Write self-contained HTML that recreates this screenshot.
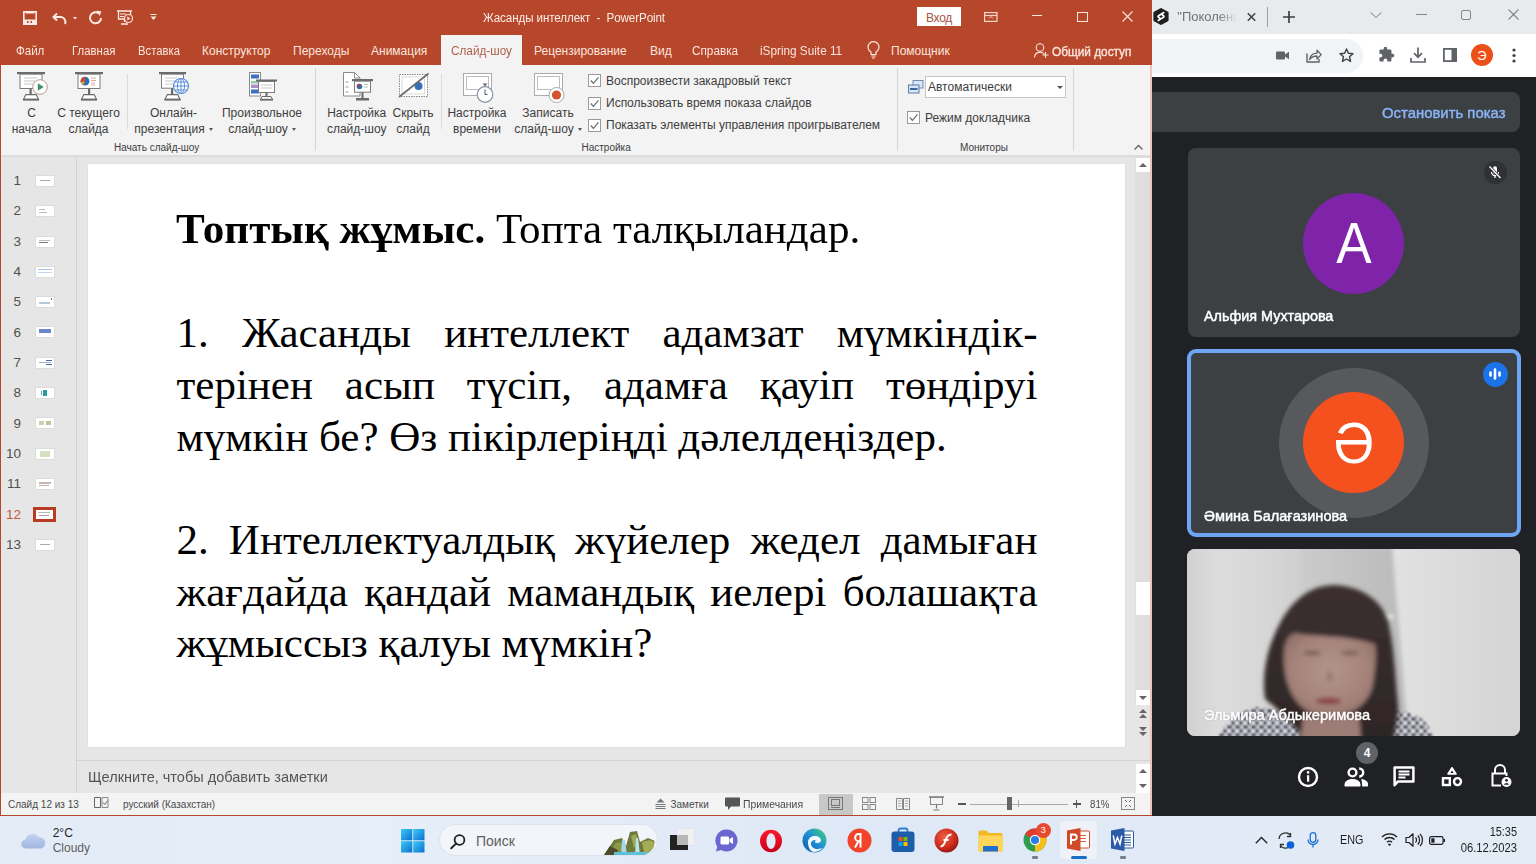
<!DOCTYPE html>
<html><head><meta charset="utf-8">
<style>
*{box-sizing:border-box}
html,body{margin:0;padding:0}
body{width:1536px;height:864px;position:relative;overflow:hidden;font-family:"Liberation Sans",sans-serif;background:#202124}
.a{position:absolute}
.t{position:absolute;white-space:nowrap;line-height:1}
.f12{font-size:12px}
.f10{font-size:10px}
svg{position:absolute;overflow:visible}
</style></head><body>

<!-- ================= POWERPOINT WINDOW ================= -->
<div class="a" id="ppt" style="left:0;top:0;width:1152px;height:816px;background:#e6e6e6;overflow:hidden">
  <!-- title + tabs red -->
  <div class="a" style="left:0;top:0;width:1152px;height:65px;background:#b7472a"></div>
  <!-- ribbon -->
  <div class="a" style="left:0;top:65px;width:1152px;height:90px;background:#f3f3f3"></div>
  <div class="a" style="left:0;top:155px;width:1152px;height:2px;background:#dcdcdc"></div>
  <!-- thumbnail pane -->
  <div class="a" style="left:76px;top:157px;width:1px;height:636px;background:#d2d2d2"></div>
  <!-- slide -->
  <div class="a" style="left:88px;top:163.5px;width:1036.5px;height:583.5px;background:#fff;box-shadow:0 0 1px #c8c8c8"></div>
  <!-- scrollbar -->
  <div class="a" style="left:1135px;top:157px;width:15px;height:603px;background:#dedede"></div>
  <!-- notes divider -->
  <div class="a" style="left:77px;top:760px;width:1075px;height:1px;background:#d2d2d2"></div>
  <!-- status bar -->
  <div class="a" style="left:0;top:793px;width:1152px;height:22px;background:#f3f3f3"></div>
  <!-- borders -->
  <div class="a" style="left:0;top:815px;width:1152px;height:1px;background:#b7472a"></div>
  <div class="a" style="left:0;top:65px;width:1px;height:750px;background:#b7472a"></div>
  <div class="a" style="left:1150px;top:65px;width:2px;height:750px;background:#ecc4b8"></div>

  <!-- QAT -->
  <svg style="left:23px;top:10.5px" width="14" height="14" viewBox="0 0 14 14"><path d="M0.8 0.8h12.4v12.4h-12.4z" fill="none" stroke="#fbeae5" stroke-width="1.6"/><rect x="2.5" y="1" width="9" height="1.5" fill="#fbeae5"/><rect x="1" y="8.5" width="12" height="4.5" fill="#fbeae5"/><rect x="4" y="10" width="1.5" height="2" fill="#b7472a"/><rect x="7.5" y="10" width="1.5" height="2" fill="#b7472a"/></svg>
  <svg style="left:52px;top:11px" width="26" height="14" viewBox="0 0 26 14"><path d="M5 2.5L1.5 6 5 9.5M1.8 6H9a5 5 0 0 1 4 7" fill="none" stroke="#fbeae5" stroke-width="2"/><path d="M21 6h4l-2 2.5z" fill="#fbeae5"/></svg>
  <svg style="left:88px;top:10px" width="15" height="15" viewBox="0 0 15 15"><path d="M10.5 3.2A5.5 5.5 0 1 0 13 8" fill="none" stroke="#fbeae5" stroke-width="2"/><path d="M8.5 0.5L13.5 1.5 11.5 6z" fill="#fbeae5"/></svg>
  <svg style="left:117px;top:10px" width="17" height="16" viewBox="0 0 17 16"><path d="M0 1h15M1.5 1v8h12V1M7.5 9v3M4 14h7" fill="none" stroke="#fbeae5" stroke-width="1.3"/><path d="M3 4h6M3 6.5h4" stroke="#fbeae5" stroke-width="1"/><circle cx="11.5" cy="8.5" r="4" fill="#b7472a" stroke="#fbeae5" stroke-width="1.2"/><path d="M10.3 6.5v4l3-2z" fill="#fbeae5"/></svg>
  <svg style="left:150px;top:14px" width="7" height="7" viewBox="0 0 7 7"><path d="M0.5 0.5h6" stroke="#fbeae5" stroke-width="1"/><path d="M0.5 2.5h6l-3 3.5z" fill="#fbeae5"/></svg>

  <!-- Title -->
  <div class="t f12" style="left:483px;top:12px;color:#fbeee9;letter-spacing:-0.1px;transform-origin:0 0;transform:scaleX(0.967)">Жасанды интеллект&nbsp; -&nbsp; PowerPoint</div>
  <!-- Вход -->
  <div class="a" style="left:917px;top:7px;width:44px;height:19px;background:#fff"></div>
  <div class="t f12" style="left:926px;top:12px;color:#a8543f;letter-spacing:-0.3px">Вход</div>
  <!-- ribbon display options -->
  <svg style="left:984px;top:12px" width="14" height="10" viewBox="0 0 14 10"><rect x="0.6" y="0.6" width="12.4" height="8.8" fill="none" stroke="#f5d5cc" stroke-width="1.2"/><path d="M0.6 3.5h12.4" stroke="#f5d5cc" stroke-width="1.2"/><path d="M5 6.5l2-2 2 2" fill="none" stroke="#f5d5cc" stroke-width="1"/></svg>
  <!-- min / max / close -->
  <div class="a" style="left:1032px;top:15px;width:10px;height:1px;background:#fbe6e0"></div>
  <div class="a" style="left:1077px;top:12px;width:11px;height:10px;border:1px solid #fbe6e0"></div>
  <svg style="left:1122px;top:11px" width="11" height="11" viewBox="0 0 11 11"><path d="M0.5 0.5l10 10M10.5 0.5l-10 10" stroke="#fbe6e0" stroke-width="1.1"/></svg>

  <!-- Tabs -->
  <div class="a" style="left:441px;top:35px;width:81px;height:31px;background:#f3f3f3"></div>
  <div class="t f12" style="left:16px;top:45px;color:#fbe5df;transform-origin:0 0;transform:scaleX(0.96)">Файл</div>
  <div class="t f12" style="left:72px;top:45px;color:#fbe5df;transform-origin:0 0;transform:scaleX(0.95)">Главная</div>
  <div class="t f12" style="left:138px;top:45px;color:#fbe5df;transform-origin:0 0;transform:scaleX(0.94)">Вставка</div>
  <div class="t f12" style="left:202px;top:45px;color:#fbe5df">Конструктор</div>
  <div class="t f12" style="left:293px;top:45px;color:#fbe5df">Переходы</div>
  <div class="t f12" style="left:371px;top:45px;color:#fbe5df">Анимация</div>
  <div class="t f12" style="left:451px;top:45px;color:#ac5f4a;transform-origin:0 0;transform:scaleX(0.98)">Слайд-шоу</div>
  <div class="t f12" style="left:534px;top:45px;color:#fbe5df">Рецензирование</div>
  <div class="t f12" style="left:650px;top:45px;color:#fbe5df">Вид</div>
  <div class="t f12" style="left:692px;top:45px;color:#fbe5df;transform-origin:0 0;transform:scaleX(0.98)">Справка</div>
  <div class="t f12" style="left:760px;top:45px;color:#fbe5df;transform-origin:0 0;transform:scaleX(0.98)">iSpring Suite 11</div>
  <svg style="left:867px;top:42px" width="13" height="17" viewBox="0 0 13 17"><path d="M4 12.5v-2.5a5.5 5.5 0 1 1 5 0v2.5z" fill="none" stroke="#fbe5df" stroke-width="1.2"/><path d="M4.3 14h4.4M5 16h3" stroke="#fbe5df" stroke-width="1.2"/></svg>
  <div class="t f12" style="left:891px;top:45px;color:#fbe5df">Помощник</div>
  <svg style="left:1034px;top:43px" width="15" height="15" viewBox="0 0 15 15"><circle cx="6" cy="4.5" r="3.8" fill="none" stroke="#fbe5df" stroke-width="1.1"/><path d="M0.5 14.5a5.5 5.5 0 0 1 10 -3" fill="none" stroke="#fbe5df" stroke-width="1.1"/><path d="M11.5 9v6M8.5 12h6" stroke="#fbe5df" stroke-width="1.1"/></svg>
  <div class="t f12" style="left:1052px;top:45.5px;color:#fbe5df;-webkit-text-stroke:0.35px #fbe5df;transform-origin:0 0;transform:scaleX(0.985)">Общий доступ</div>
<!-- ===== RIBBON ===== -->
<svg style="left:17px;top:72px" width="32" height="29" viewBox="0 0 32 29"><rect x="0" y="0" width="28" height="2.2" fill="#6a6a6a"/><rect x="3" y="2.2" width="22" height="14.3" fill="#fff" stroke="#7c7c7c" stroke-width="1"/><path d="M7 6h13M7 9h11M7 12h9" stroke="#c8c8c8" stroke-width="1.2"/><rect x="12.5" y="16.5" width="2.2" height="7" fill="#6a6a6a"/><path d="M6.5 27.5L8.8 22.6H19.2L21.5 27.5Z" fill="#fff" stroke="#6a6a6a" stroke-width="1.1"/><rect x="6" y="26.6" width="16" height="2" fill="#6a6a6a"/><circle cx="23" cy="15" r="7.3" fill="#fff" stroke="#b89a9a" stroke-width="1"/><path d="M20.8 11.2v7.6l6-3.8z" fill="#3f9073"/></svg>
<svg style="left:75px;top:72px" width="28" height="29" viewBox="0 0 28 29"><rect x="0" y="0" width="28" height="2.2" fill="#6a6a6a"/><rect x="3" y="2.2" width="22" height="14.3" fill="#fff" stroke="#7c7c7c" stroke-width="1"/><circle cx="10" cy="9.2" r="4.4" fill="#2f6db5"/><path d="M10 9.2V4.8A4.4 4.4 0 0 0 5.8 10.5z" fill="#d9482b"/><path d="M10 9.2L5.8 10.5A4.4 4.4 0 0 0 8 13z" fill="#f0b429"/><path d="M16 6h5M16 8.5h5M16 11h4M16 13h4" stroke="#e0a090" stroke-width="0.9"/><rect x="13" y="16.5" width="2.2" height="7" fill="#6a6a6a"/><path d="M6.5 27.5L8.8 22.6H19.2L21.5 27.5Z" fill="#fff" stroke="#6a6a6a" stroke-width="1.1"/><rect x="6" y="26.6" width="16" height="2" fill="#6a6a6a"/></svg>
<div class="a" style="left:127px;top:74px;width:1px;height:55px;background:#dadada"></div>
<svg style="left:159px;top:72px" width="32" height="29" viewBox="0 0 32 29"><rect x="0" y="0" width="27" height="2.2" fill="#6a6a6a"/><rect x="2.5" y="2.2" width="22" height="14" fill="#fff" stroke="#7c7c7c" stroke-width="1"/><path d="M6 6h12M6 9h10M6 12h8" stroke="#c8c8c8" stroke-width="1.2"/><rect x="12" y="16.2" width="2.2" height="7" fill="#6a6a6a"/><path d="M6 27.5L8.3 22.6H18.7L21 27.5Z" fill="#fff" stroke="#6a6a6a" stroke-width="1.1"/><rect x="5.5" y="26.6" width="16" height="2" fill="#6a6a6a"/><circle cx="22" cy="14" r="7.5" fill="#fff" stroke="#5d8fd6" stroke-width="1.2"/><path d="M14.5 14h15M22 6.5v15M16 10h12M16 18h12" stroke="#5d8fd6" stroke-width="1"/><ellipse cx="22" cy="14" rx="3.5" ry="7.5" fill="none" stroke="#5d8fd6" stroke-width="1"/></svg>
<svg style="left:249px;top:72px" width="29" height="29" viewBox="0 0 29 29"><rect x="0.5" y="0.5" width="11" height="23.5" fill="#fff" stroke="#8a8a8a" stroke-width="1"/><rect x="2" y="2.5" width="8" height="4" fill="#3a72c0"/><rect x="2" y="9" width="8" height="2.5" fill="#8fd0a0"/><rect x="2" y="12.5" width="8" height="3.5" fill="#a890c8"/><rect x="2" y="17.5" width="8" height="4" fill="#3a72c0"/><rect x="7" y="7.5" width="21" height="2" fill="#6a6a6a"/><rect x="9.5" y="9.5" width="16" height="11" fill="#fff" stroke="#7c7c7c" stroke-width="1"/><path d="M12 13h11M12 16h11" stroke="#c8c8c8" stroke-width="1"/><rect x="16.5" y="20.5" width="2" height="5" fill="#6a6a6a"/><path d="M11.5 27.5L13 24.5H22L23.5 27.5Z" fill="#fff" stroke="#6a6a6a" stroke-width="1"/><rect x="11" y="26.8" width="13" height="1.8" fill="#6a6a6a"/></svg>
<div class="a" style="left:315px;top:68px;width:1px;height:83px;background:#d6d6d6"></div>
<svg style="left:343px;top:72px" width="30" height="29" viewBox="0 0 30 29"><path d="M0.5 0.5H11.5L17 6V24H0.5Z" fill="#fff" stroke="#8a8a8a" stroke-width="1"/><path d="M11.5 0.5V6H17" fill="none" stroke="#8a8a8a" stroke-width="1"/><path d="M2.5 10h3M2.5 15h3M2.5 20h3" stroke="#9a9a9a" stroke-width="1"/><rect x="9" y="7" width="21" height="2.2" fill="#6a6a6a"/><rect x="11.5" y="9.2" width="16" height="11" fill="#fff" stroke="#7c7c7c" stroke-width="1"/><circle cx="16.5" cy="14.5" r="2.8" fill="#2f6db5"/><path d="M16.5 14.5V11.7A2.8 2.8 0 0 0 13.8 15z" fill="#c0392b"/><path d="M21 12.5h4M21 15h4" stroke="#a8c0a0" stroke-width="0.9"/><rect x="18.5" y="20.2" width="2" height="6" fill="#6a6a6a"/><rect x="13" y="26" width="13" height="2.5" fill="#6a6a6a"/></svg>
<svg style="left:399px;top:73px" width="30" height="25" viewBox="0 0 30 25"><rect x="0.5" y="1.5" width="28" height="22" fill="#fff" stroke="#8a8a8a" stroke-width="1" stroke-dasharray="1.5 1"/><rect x="3" y="4" width="22.5" height="17" fill="none" stroke="#cfcfcf" stroke-width="0.8"/><circle cx="19.5" cy="13" r="4" fill="#3a6fb5"/><path d="M0 24L29.5 0.5" stroke="#6a6a6a" stroke-width="1.6"/></svg>
<div class="a" style="left:441px;top:74px;width:1px;height:55px;background:#dadada"></div>
<svg style="left:463px;top:73px" width="32" height="31" viewBox="0 0 32 31"><rect x="0.5" y="0.5" width="28" height="22" fill="#fff" stroke="#acacac" stroke-width="1"/><rect x="3.5" y="3.5" width="22" height="13" fill="#fff" stroke="#bdbdbd" stroke-width="1"/><circle cx="22" cy="21.5" r="7.8" fill="#fff" stroke="#8a98ad" stroke-width="1.2"/><path d="M19.5 10.5h5l-2.5 3z" fill="#6a6a6a"/><path d="M22 16.5v5h2.5" fill="none" stroke="#555" stroke-width="1"/></svg>
<svg style="left:534px;top:73px" width="31" height="31" viewBox="0 0 31 31"><rect x="0.5" y="0.5" width="28" height="22" fill="#fff" stroke="#acacac" stroke-width="1"/><rect x="3.5" y="3.5" width="22" height="13" fill="#fff" stroke="#bdbdbd" stroke-width="1"/><circle cx="22.5" cy="22" r="7.5" fill="#fff" stroke="#a8a8a8" stroke-width="1"/><circle cx="22.5" cy="22" r="4.6" fill="#d35230"/></svg>
<div class="t f12" style="left:-68.5px;width:200px;text-align:center;top:106.6px;color:#3d3d3d">С</div>
<div class="t f12" style="left:-68.5px;width:200px;text-align:center;top:122.6px;color:#3d3d3d">начала</div>
<div class="t f12" style="left:-11.5px;width:200px;text-align:center;top:106.6px;color:#3d3d3d">С текущего</div>
<div class="t f12" style="left:-11.5px;width:200px;text-align:center;top:122.6px;color:#3d3d3d">слайда</div>
<div class="t f12" style="left:73.5px;width:200px;text-align:center;top:106.6px;color:#3d3d3d">Онлайн-</div>
<div class="t f12" style="left:73.5px;width:200px;text-align:center;top:122.6px;color:#3d3d3d">презентация<span style="display:inline-block;width:0;height:0;border-left:2.5px solid transparent;border-right:2.5px solid transparent;border-top:3px solid #555;margin-left:4px;vertical-align:2px"></span></div>
<div class="t f12" style="left:162px;width:200px;text-align:center;top:106.6px;color:#3d3d3d">Произвольное</div>
<div class="t f12" style="left:162px;width:200px;text-align:center;top:122.6px;color:#3d3d3d">слайд-шоу<span style="display:inline-block;width:0;height:0;border-left:2.5px solid transparent;border-right:2.5px solid transparent;border-top:3px solid #555;margin-left:4px;vertical-align:2px"></span></div>
<div class="t f12" style="left:256.7px;width:200px;text-align:center;top:106.6px;color:#3d3d3d">Настройка</div>
<div class="t f12" style="left:256.7px;width:200px;text-align:center;top:122.6px;color:#3d3d3d">слайд-шоу</div>
<div class="t f12" style="left:313px;width:200px;text-align:center;top:106.6px;color:#3d3d3d">Скрыть</div>
<div class="t f12" style="left:313px;width:200px;text-align:center;top:122.6px;color:#3d3d3d">слайд</div>
<div class="t f12" style="left:377px;width:200px;text-align:center;top:106.6px;color:#3d3d3d">Настройка</div>
<div class="t f12" style="left:377px;width:200px;text-align:center;top:122.6px;color:#3d3d3d">времени</div>
<div class="t f12" style="left:448px;width:200px;text-align:center;top:106.6px;color:#3d3d3d">Записать</div>
<div class="t f12" style="left:448px;width:200px;text-align:center;top:122.6px;color:#3d3d3d">слайд-шоу<span style="display:inline-block;width:0;height:0;border-left:2.5px solid transparent;border-right:2.5px solid transparent;border-top:3px solid #555;margin-left:4px;vertical-align:2px"></span></div>
<svg style="left:588px;top:74px" width="13" height="13" viewBox="0 0 13 13"><rect x="0.5" y="0.5" width="12" height="12" fill="#fff" stroke="#9a9a9a" stroke-width="1"/><path d="M2.8 6.5l2.6 2.8 5-6" fill="none" stroke="#6a6a6a" stroke-width="1.2"/></svg>
<svg style="left:588px;top:96.5px" width="13" height="13" viewBox="0 0 13 13"><rect x="0.5" y="0.5" width="12" height="12" fill="#fff" stroke="#9a9a9a" stroke-width="1"/><path d="M2.8 6.5l2.6 2.8 5-6" fill="none" stroke="#6a6a6a" stroke-width="1.2"/></svg>
<svg style="left:588px;top:118.5px" width="13" height="13" viewBox="0 0 13 13"><rect x="0.5" y="0.5" width="12" height="12" fill="#fff" stroke="#9a9a9a" stroke-width="1"/><path d="M2.8 6.5l2.6 2.8 5-6" fill="none" stroke="#6a6a6a" stroke-width="1.2"/></svg>
<div class="t f12" style="left:606px;top:74.8px;color:#3d3d3d">Воспроизвести закадровый текст</div>
<div class="t f12" style="left:606px;top:97.1px;color:#3d3d3d">Использовать время показа слайдов</div>
<div class="t f12" style="left:606px;top:119.4px;color:#3d3d3d">Показать элементы управления проигрывателем</div>
<div class="t f10" style="left:114px;top:143.1px;color:#3d3d3d">Начать слайд-шоу</div>
<div class="t f10" style="left:581.5px;top:142.9px;color:#3d3d3d">Настройка</div>
<div class="t f10" style="left:960px;top:142.5px;color:#3d3d3d">Мониторы</div>
<div class="a" style="left:897px;top:68px;width:1px;height:83px;background:#d6d6d6"></div>
<div class="a" style="left:1073px;top:68px;width:1px;height:83px;background:#d6d6d6"></div>
<svg style="left:908px;top:80px" width="16" height="15" viewBox="0 0 16 15"><rect x="5" y="0.5" width="10" height="7.5" fill="#dbe6f4" stroke="#6f8fb8" stroke-width="1"/><rect x="0.5" y="5" width="10.5" height="8" fill="#dbe6f4" stroke="#5a7ca8" stroke-width="1"/><rect x="2" y="8" width="7.5" height="2" fill="#3a66a0"/></svg>
<div class="a" style="left:925px;top:76px;width:141px;height:22px;background:#fff;border:1px solid #c6c6c6"></div>
<div class="t f12" style="left:928px;top:80.8px;color:#3d3d3d">Автоматически</div>
<div class="a" style="left:1057px;top:86px;width:0;height:0;border-left:3px solid transparent;border-right:3px solid transparent;border-top:3px solid #555"></div>
<svg style="left:907px;top:111px" width="13" height="13" viewBox="0 0 13 13"><rect x="0.5" y="0.5" width="12" height="12" fill="#fff" stroke="#9a9a9a" stroke-width="1"/><path d="M2.8 6.5l2.6 2.8 5-6" fill="none" stroke="#6a6a6a" stroke-width="1.2"/></svg>
<div class="t f12" style="left:925px;top:112.2px;color:#3d3d3d">Режим докладчика</div>
<svg style="left:1134px;top:144px" width="9" height="6" viewBox="0 0 9 6"><path d="M0.5 5.5l4-4 4 4" fill="none" stroke="#666" stroke-width="1.3"/></svg>
<div class="t" style="font-size:13.5px;left:0;width:21px;text-align:right;top:174.0px;color:#505050">1</div>
<div class="a" style="left:35.5px;top:175.8px;width:18.5px;height:10px;background:#fff;box-shadow:0 0 0 1px #dcdcdc;overflow:hidden"><div class="a" style="left:4px;top:4px;width:10px;height:1.5px;background:#a8a8a8"></div></div>
<div class="t" style="font-size:13.5px;left:0;width:21px;text-align:right;top:204.3px;color:#505050">2</div>
<div class="a" style="left:35.5px;top:206.1px;width:18.5px;height:10px;background:#fff;box-shadow:0 0 0 1px #dcdcdc;overflow:hidden"><div class="a" style="left:3px;top:3px;width:6px;height:1px;background:#bbb"></div><div class="a" style="left:3px;top:6px;width:8px;height:1px;background:#bbb"></div></div>
<div class="t" style="font-size:13.5px;left:0;width:21px;text-align:right;top:234.6px;color:#505050">3</div>
<div class="a" style="left:35.5px;top:236.5px;width:18.5px;height:10px;background:#fff;box-shadow:0 0 0 1px #dcdcdc;overflow:hidden"><div class="a" style="left:3px;top:3px;width:11px;height:1px;background:#bbb"></div><div class="a" style="left:3px;top:5px;width:9px;height:1.5px;background:#777"></div></div>
<div class="t" style="font-size:13.5px;left:0;width:21px;text-align:right;top:265.0px;color:#505050">4</div>
<div class="a" style="left:35.5px;top:266.8px;width:18.5px;height:10px;background:#fff;box-shadow:0 0 0 1px #dcdcdc;overflow:hidden"><div class="a" style="left:2px;top:2px;width:14px;height:1.5px;background:#a6c2e4"></div><div class="a" style="left:2px;top:5px;width:14px;height:1px;background:#c3d6ec"></div></div>
<div class="t" style="font-size:13.5px;left:0;width:21px;text-align:right;top:295.3px;color:#505050">5</div>
<div class="a" style="left:35.5px;top:297.1px;width:18.5px;height:10px;background:#fff;box-shadow:0 0 0 1px #dcdcdc;overflow:hidden"><div class="a" style="left:3px;top:5px;width:11px;height:1.5px;background:#b9cadc"></div><div class="a" style="left:15px;top:1px;width:1px;height:2px;background:#777"></div></div>
<div class="t" style="font-size:13.5px;left:0;width:21px;text-align:right;top:325.6px;color:#505050">6</div>
<div class="a" style="left:35.5px;top:327.4px;width:18.5px;height:10px;background:#fff;box-shadow:0 0 0 1px #dcdcdc;overflow:hidden"><div class="a" style="left:3px;top:2px;width:12px;height:4px;background:#6a88c8"></div></div>
<div class="t" style="font-size:13.5px;left:0;width:21px;text-align:right;top:356.0px;color:#505050">7</div>
<div class="a" style="left:35.5px;top:357.8px;width:18.5px;height:10px;background:#fff;box-shadow:0 0 0 1px #dcdcdc;overflow:hidden"><div class="a" style="left:3px;top:4px;width:12px;height:1px;background:#aac"></div><div class="a" style="left:10px;top:2px;width:6px;height:1px;background:#4a6aa8"></div><div class="a" style="left:10px;top:6px;width:6px;height:1px;background:#4a6aa8"></div></div>
<div class="t" style="font-size:13.5px;left:0;width:21px;text-align:right;top:386.3px;color:#505050">8</div>
<div class="a" style="left:35.5px;top:388.1px;width:18.5px;height:10px;background:#fff;box-shadow:0 0 0 1px #dcdcdc;overflow:hidden"><div class="a" style="left:7px;top:2px;width:4px;height:6px;background:#2a9aa0"></div><div class="a" style="left:5px;top:3px;width:1px;height:4px;background:#5aa"></div></div>
<div class="t" style="font-size:13.5px;left:0;width:21px;text-align:right;top:416.6px;color:#505050">9</div>
<div class="a" style="left:35.5px;top:418.4px;width:18.5px;height:10px;background:#fff;box-shadow:0 0 0 1px #dcdcdc;overflow:hidden"><div class="a" style="left:3px;top:3px;width:5px;height:4px;background:#c8d4b0"></div><div class="a" style="left:10px;top:3px;width:5px;height:4px;background:#b8c8a0"></div></div>
<div class="t" style="font-size:13.5px;left:0;width:21px;text-align:right;top:446.9px;color:#505050">10</div>
<div class="a" style="left:35.5px;top:448.8px;width:18.5px;height:10px;background:#fff;box-shadow:0 0 0 1px #dcdcdc;overflow:hidden"><div class="a" style="left:4px;top:2px;width:10px;height:6px;background:#d4e0c0"></div></div>
<div class="t" style="font-size:13.5px;left:0;width:21px;text-align:right;top:477.3px;color:#505050">11</div>
<div class="a" style="left:35.5px;top:479.1px;width:18.5px;height:10px;background:#fff;box-shadow:0 0 0 1px #dcdcdc;overflow:hidden"><div class="a" style="left:3px;top:3px;width:12px;height:2px;background:#c8b8b0"></div><div class="a" style="left:3px;top:6px;width:10px;height:1px;background:#bbb"></div></div>
<div class="t" style="font-size:13.5px;left:0;width:21px;text-align:right;top:507.6px;color:#c35a3f">12</div>
<div class="a" style="left:33px;top:506.8px;width:23px;height:15px;border:3px solid #b83b23;background:#fff;overflow:hidden"><div class="a" style="left:2px;top:2px;width:12px;height:1px;background:#bba"></div><div class="a" style="left:3px;top:5px;width:10px;height:1px;background:#b9a"></div></div>
<div class="t" style="font-size:13.5px;left:0;width:21px;text-align:right;top:537.9px;color:#505050">13</div>
<div class="a" style="left:35.5px;top:539.8px;width:18.5px;height:10px;background:#fff;box-shadow:0 0 0 1px #dcdcdc;overflow:hidden"><div class="a" style="left:4px;top:4px;width:10px;height:1.5px;background:#aaa"></div></div>
<div class="a" style="left:1136px;top:158px;width:14px;height:14px;background:#fff"></div>
<div class="a" style="left:1139px;top:163px;width:0;height:0;border-left:4px solid transparent;border-right:4px solid transparent;border-bottom:4px solid #666"></div>
<div class="a" style="left:1136px;top:581.5px;width:14px;height:33px;background:#fff"></div>
<div class="a" style="left:1136px;top:690px;width:14px;height:15px;background:#fff"></div>
<div class="a" style="left:1139px;top:696px;width:0;height:0;border-left:4px solid transparent;border-right:4px solid transparent;border-top:4px solid #666"></div>
<div class="a" style="left:1135px;top:705px;width:15px;height:55px;background:#e6e6e6"></div>
<svg style="left:1139px;top:709px" width="8" height="9" viewBox="0 0 8 9"><path d="M0 4L4 0L8 4zM0 9L4 5L8 9z" fill="#666"/></svg>
<svg style="left:1139px;top:727px" width="8" height="9" viewBox="0 0 8 9"><path d="M0 0L4 4L8 0zM0 5L4 9L8 5z" fill="#666"/></svg>
<div class="a" style="left:1136px;top:764px;width:14px;height:15px;background:#fff"></div>
<div class="a" style="left:1139px;top:769px;width:0;height:0;border-left:4px solid transparent;border-right:4px solid transparent;border-bottom:4px solid #666"></div>
<div class="a" style="left:1136px;top:779px;width:14px;height:14px;background:#fff"></div>
<div class="a" style="left:1139px;top:784px;width:0;height:0;border-left:4px solid transparent;border-right:4px solid transparent;border-top:4px solid #666"></div>
<div class="t" style="font-size:14px;left:88px;top:769.8px;color:#555;transform-origin:0 0;transform:scaleX(1.037)">Щелкните, чтобы добавить заметки</div>
<div class="t f10" style="left:8px;top:800.0px;color:#4a4a4a">Слайд 12 из 13</div>
<svg style="left:94px;top:797px" width="15" height="12" viewBox="0 0 15 12"><path d="M0.5 0.5h6v10h-6z" fill="none" stroke="#666" stroke-width="1"/><path d="M8 0.5h6v10h-6z" fill="none" stroke="#888" stroke-width="1"/><path d="M9 5.5l1.8 2 3-4" fill="none" stroke="#666" stroke-width="1"/></svg>
<div class="t f10" style="left:123px;top:800.0px;color:#4a4a4a">русский (Казахстан)</div>
<svg style="left:655px;top:798px" width="11" height="11" viewBox="0 0 11 11"><path d="M5.5 0.5L9.5 4.5H1.5z" fill="#777"/><path d="M0.5 6.5h10M0.5 8.5h10M0.5 10.5h10" stroke="#777" stroke-width="1"/></svg>
<div class="t f10" style="left:670.5px;top:800.0px;color:#4a4a4a">Заметки</div>
<svg style="left:725px;top:797px" width="15" height="14" viewBox="0 0 15 14"><path d="M1 0.5h13a1 1 0 0 1 1 1v7a1 1 0 0 1-1 1H6l-3 3.5V9.5H1a1 1 0 0 1-1-1v-7a1 1 0 0 1 1-1z" fill="#555"/></svg>
<div class="t f10" style="left:742.5px;top:800.0px;color:#4a4a4a;transform-origin:0 0;transform:scaleX(1.04)">Примечания</div>
<div class="a" style="left:819px;top:794px;width:34px;height:21px;background:#c8c8c8"></div>
<svg style="left:828px;top:797px" width="15" height="13" viewBox="0 0 15 13"><rect x="0.5" y="0.5" width="14" height="12" fill="none" stroke="#777" stroke-width="1"/><rect x="3.5" y="2.5" width="8" height="6" fill="none" stroke="#777" stroke-width="1"/><path d="M3 10.5h9" stroke="#777"/></svg>
<svg style="left:862px;top:797px" width="14" height="13" viewBox="0 0 14 13"><rect x="0.5" y="0.5" width="5.5" height="5" fill="none" stroke="#888"/><rect x="8" y="0.5" width="5.5" height="5" fill="none" stroke="#888"/><rect x="0.5" y="7.5" width="5.5" height="5" fill="none" stroke="#888"/><rect x="8" y="7.5" width="5.5" height="5" fill="none" stroke="#888"/></svg>
<svg style="left:896px;top:797px" width="14" height="13" viewBox="0 0 14 13"><path d="M0.5 1.5h6v11h-6zM7.5 1.5h6v11h-6z" fill="none" stroke="#888"/><path d="M2 4h3M2 6.5h3M2 9h3M9 4h3M9 6.5h3M9 9h3" stroke="#999" stroke-width="0.8"/></svg>
<svg style="left:929px;top:796px" width="15" height="15" viewBox="0 0 15 15"><path d="M0 1h15" stroke="#777" stroke-width="1.5"/><rect x="1.5" y="1.5" width="12" height="7" fill="none" stroke="#888"/><path d="M7.5 8.5v4M4.5 14h6" stroke="#777" stroke-width="1.2"/></svg>
<div class="a" style="left:957.5px;top:803px;width:8px;height:1.5px;background:#555"></div>
<div class="a" style="left:970px;top:803.5px;width:98px;height:1px;background:#a8a8a8"></div>
<div class="a" style="left:1018px;top:800px;width:1px;height:7px;background:#a8a8a8"></div>
<div class="a" style="left:1007px;top:797px;width:4.5px;height:13px;background:#666"></div>
<div class="a" style="left:1072.5px;top:803px;width:8px;height:1.5px;background:#555"></div>
<div class="a" style="left:1075.8px;top:799.8px;width:1.5px;height:8px;background:#555"></div>
<div class="t f10" style="left:1089.5px;top:800.0px;color:#4a4a4a;transform-origin:0 0;transform:scaleX(0.97)">81%</div>
<svg style="left:1121px;top:797px" width="14" height="13" viewBox="0 0 14 13"><rect x="0.5" y="0.5" width="13" height="12" fill="none" stroke="#888"/><path d="M4 3l2 2M10 3l-2 2M4 10l2-2M10 10l-2-2" stroke="#666" stroke-width="1"/></svg>
<div class="t" style="font-family:'Liberation Serif',serif;font-size:43px;left:176px;top:207.2px;color:#000;transform-origin:0 0;transform:scaleX(1.002)"><b>Топтық жұмыс.</b> Топта талқыландар.</div>
<div class="a" style="font-family:'Liberation Serif',serif;font-size:43px;line-height:1;left:176.5px;width:861px;top:311.2px;color:#000;display:flex;justify-content:space-between;white-space:nowrap"><span>1.</span><span>Жасанды</span><span>интеллект</span><span>адамзат</span><span>мүмкіндік-</span></div>
<div class="a" style="font-family:'Liberation Serif',serif;font-size:43px;line-height:1;left:176.5px;width:861px;top:362.8px;color:#000;display:flex;justify-content:space-between;white-space:nowrap"><span>терінен</span><span>асып</span><span>түсіп,</span><span>адамға</span><span>қауіп</span><span>төндіруі</span></div>
<div class="t" style="font-family:'Liberation Serif',serif;font-size:43px;left:176.5px;top:414.5px;color:#000">мүмкін бе? Өз пікірлеріңді дәлелдеңіздер.</div>
<div class="a" style="font-family:'Liberation Serif',serif;font-size:43px;line-height:1;left:176.5px;width:861px;top:517.8px;color:#000;display:flex;justify-content:space-between;white-space:nowrap"><span>2.</span><span>Интеллектуалдық</span><span>жүйелер</span><span>жедел</span><span>дамыған</span></div>
<div class="a" style="font-family:'Liberation Serif',serif;font-size:43px;line-height:1;left:176.5px;width:861px;top:569.5px;color:#000;display:flex;justify-content:space-between;white-space:nowrap"><span>жағдайда</span><span>қандай</span><span>мамандық</span><span>иелері</span><span>болашақта</span></div>
<div class="t" style="font-family:'Liberation Serif',serif;font-size:43px;left:176.5px;top:621.0px;color:#000">жұмыссыз қалуы мүмкін?</div>
</div>

<!-- ================= CHROME ================= -->
<div class="a" id="chrome" style="left:1152px;top:0;width:384px;height:816px;background:#202124;overflow:hidden">
  <div class="a" style="left:0;top:0;width:384px;height:34px;background:#e8eaed"></div>
  <div class="a" style="left:0;top:34px;width:384px;height:43px;background:#fff"></div>
  <div class="a" style="left:-40px;top:39px;width:251px;height:34px;border-radius:17px;background:#f1f3f4"></div>
  <!-- meet top bar -->
  <div class="a" style="left:-20px;top:92px;width:388px;height:40px;border-radius:8px;background:#3c4043"></div>
  <!-- tiles -->
  <div class="a" style="left:36px;top:148px;width:332px;height:189px;border-radius:8px;background:#3c4043"></div>
  <div class="a" style="left:35px;top:349px;width:334px;height:188px;border-radius:9px;background:#3c4043;border:4px solid #6ea6f6"></div>
  <svg style="left:1px;top:8px" width="16" height="17" viewBox="0 0 16 17"><path d="M8 1.2L14.4 4.8V12.2L8 15.8L1.6 12.2V4.8Z" fill="#1f1f1f" stroke="#1f1f1f" stroke-width="2.4" stroke-linejoin="round"/><path d="M10.8 4.6L5.6 7.7Q4.4 8.5 5.6 9.3L6.6 9.9M5.2 12.4L10.4 9.3Q11.6 8.5 10.4 7.7L9.4 7.1" fill="none" stroke="#fff" stroke-width="1.7" stroke-linecap="round"/></svg>
<div class="t" style="font-size:13px;left:25.299999999999955px;top:9.5px;color:#707478;width:60px;overflow:hidden;-webkit-mask-image:linear-gradient(90deg,#000 70%,transparent 100%)">"Поколение</div>
<svg style="left:95px;top:13px" width="9" height="8" viewBox="0 0 9 8"><path d="M0.8 0.3L8.2 7.7M8.2 0.3L0.8 7.7" stroke="#3c4043" stroke-width="1.5"/></svg>
<div class="a" style="left:114.5px;top:7px;width:1px;height:20px;background:#9aa0a6"></div>
<svg style="left:131px;top:11px" width="12" height="12" viewBox="0 0 12 12"><path d="M6 0v12M0 6h12" stroke="#3c4043" stroke-width="1.7"/></svg>
<svg style="left:218px;top:12px" width="12" height="6" viewBox="0 0 12 6"><path d="M0.5 0.5l5.5 5 5.5-5" fill="none" stroke="#a0a4a8" stroke-width="1.1"/></svg>
<div class="a" style="left:264px;top:14px;width:11px;height:1px;background:#80868b"></div>
<div class="a" style="left:309px;top:10px;width:10px;height:10px;border:1.2px solid #80868b;border-radius:2px"></div>
<svg style="left:356px;top:9px" width="11" height="11" viewBox="0 0 11 11"><path d="M0.5 0.5l10 10M10.5 0.5l-10 10" stroke="#80868b" stroke-width="1.1"/></svg>
<svg style="left:123.5px;top:51px" width="13" height="9" viewBox="0 0 13 9"><rect x="0" y="0.5" width="9" height="8" rx="1" fill="#5f6368"/><path d="M9 3.5L13 0.8V8.2L9 5.5z" fill="#5f6368"/></svg>
<svg style="left:154px;top:48px" width="16" height="15" viewBox="0 0 16 15"><path d="M1 5.5V14H13V11" fill="none" stroke="#5f6368" stroke-width="1.4"/><path d="M3.5 11.5C4.5 7 7.5 5.2 11 5.2V2.2L15.2 6.6 11 11V8C8 8 5.5 9 3.5 11.5z" fill="none" stroke="#5f6368" stroke-width="1.3" stroke-linejoin="round"/></svg>
<svg style="left:186.5px;top:47.5px" width="15" height="15" viewBox="0 0 15 15"><path d="M7.5 1L9.4 5.3 14 5.7 10.5 8.8 11.6 13.4 7.5 11 3.4 13.4 4.5 8.8 1 5.7 5.6 5.3z" fill="none" stroke="#3c4043" stroke-width="1.4" stroke-linejoin="round"/></svg>
<svg style="left:225.5px;top:45.5px" width="17" height="17" viewBox="0 0 24 24"><path d="M20.5 11H19V7c0-1.1-.9-2-2-2h-4V3.5C13 2.12 11.88 1 10.5 1S8 2.12 8 3.5V5H4c-1.1 0-1.99.9-1.99 2v3.8H3.5c1.49 0 2.7 1.21 2.7 2.7s-1.21 2.7-2.7 2.7H2V20c0 1.1.9 2 2 2h3.8v-1.5c0-1.49 1.21-2.7 2.7-2.7 1.49 0 2.7 1.21 2.7 2.7V22H17c1.1 0 2-.9 2-2v-4h1.5c1.38 0 2.5-1.12 2.5-2.5S21.88 11 20.5 11z" fill="#5f6368"/></svg>
<svg style="left:258px;top:47px" width="16" height="16" viewBox="0 0 16 16"><path d="M8 0.5V10M4 6.2L8 10.2 12 6.2" fill="none" stroke="#5f6368" stroke-width="1.7"/><path d="M1 11V15H15V11" fill="none" stroke="#5f6368" stroke-width="1.7"/></svg>
<svg style="left:291px;top:48px" width="14" height="14" viewBox="0 0 14 14"><rect x="0.9" y="0.9" width="12.2" height="12.2" fill="none" stroke="#5f6368" stroke-width="1.8"/><rect x="8.5" y="1" width="4.6" height="12" fill="#5f6368"/></svg>
<div class="a" style="left:319px;top:44px;width:22px;height:22px;border-radius:50%;background:#ec4f17"></div>
<div class="t" style="font-size:13px;left:319px;width:22px;text-align:center;top:49.0px;color:#fff">Э</div>
<svg style="left:360px;top:48px" width="4" height="15" viewBox="0 0 4 15"><circle cx="2" cy="2" r="1.6" fill="#3c4043"/><circle cx="2" cy="7.5" r="1.6" fill="#3c4043"/><circle cx="2" cy="13" r="1.6" fill="#3c4043"/></svg>
<div class="t" style="font-size:14px;-webkit-text-stroke:0.4px #8ab4f8;left:230px;top:106.4px;color:#8ab4f8;transform-origin:0 0;transform:scaleX(1.063)">Остановить показ</div>
<div class="a" style="left:151px;top:193px;width:101px;height:101px;border-radius:50%;background:#7f23a8"></div>
<div class="t" style="font-size:57px;left:101.5px;width:200px;text-align:center;top:215.0px;color:#fff;transform-origin:50% 0;transform:scaleX(0.93)">A</div>
<div class="a" style="left:331.5px;top:161px;width:23px;height:23px;border-radius:50%;background:#303134"></div>
<svg style="left:336px;top:165px" width="14" height="15" viewBox="0 0 14 15"><path d="M7 1.2a2 2 0 0 1 2 2V7a2 2 0 0 1-4 0V3.2a2 2 0 0 1 2-2z" fill="#fff"/><path d="M3.5 7a3.5 3.5 0 0 0 7 0" fill="none" stroke="#fff" stroke-width="1.3"/><path d="M7 10.5V13" stroke="#fff" stroke-width="1.3"/><path d="M1.5 1.5L12.5 13" stroke="#303134" stroke-width="2.6"/><path d="M1.5 1.5L12.5 13" stroke="#fff" stroke-width="1.3"/></svg>
<div class="t" style="font-size:14px;-webkit-text-stroke:0.45px #fff;left:51.7px;top:309.1px;color:#fff;transform-origin:0 0;transform:scaleX(1.027);">Альфия Мухтарова</div>
<div class="a" style="left:126.5px;top:367.5px;width:150px;height:150px;border-radius:50%;background:#57595d"></div>
<div class="a" style="left:151px;top:392px;width:101px;height:101px;border-radius:50%;background:#f4511e"></div>
<div class="t" style="font-size:57px;left:101.5px;width:200px;text-align:center;top:415.0px;color:#fff;transform-origin:50% 0;transform:scaleX(0.95)">Ə</div>
<div class="a" style="left:330.5px;top:361.5px;width:25px;height:25px;border-radius:50%;background:#1a73e8"></div>
<svg style="left:336px;top:367px" width="14" height="14" viewBox="0 0 14 14"><path d="M2.5 5.5v3M7 2.5v9M11.5 5.5v3" stroke="#fff" stroke-width="2.6" stroke-linecap="round"/></svg>
<div class="t" style="font-size:14px;-webkit-text-stroke:0.45px #fff;left:51.49999999999996px;top:509.4px;color:#fff;transform-origin:0 0;transform:scaleX(1.038);">Әмина Балағазинова</div>
<svg style="left:145px;top:766px" width="22" height="22" viewBox="0 0 22 22"><circle cx="11" cy="11" r="9" fill="none" stroke="#fff" stroke-width="2.4"/><rect x="10" y="9.2" width="2.2" height="6.5" fill="#fff"/><circle cx="11.1" cy="6.4" r="1.3" fill="#fff"/></svg>
<svg style="left:192px;top:767px" width="25" height="20" viewBox="0 0 25 20"><circle cx="8.5" cy="5.5" r="3.9" fill="none" stroke="#fff" stroke-width="2.4"/><path d="M1.2 18.8v-1.6c0-2.8 4.2-4.6 7.3-4.6s7.3 1.8 7.3 4.6v1.6z" fill="#fff" stroke="#fff" stroke-width="1.4" stroke-linejoin="round"/><path d="M15.2 1.5a4 4 0 0 1 0 8" fill="none" stroke="#fff" stroke-width="2.4"/><path d="M17.5 12.6c2.8.6 5.8 1.9 5.8 4.2v2h-5" fill="#fff" stroke="#fff" stroke-width="1.4" stroke-linejoin="round"/></svg>
<div class="a" style="left:204px;top:742px;width:22px;height:22px;border-radius:50%;background:#5f6368"></div>
<div class="t" style="font-size:12px;font-weight:bold;left:204px;width:22px;text-align:center;top:747.3px;color:#fff">4</div>
<svg style="left:241px;top:766px" width="22" height="21" viewBox="0 0 22 21"><path d="M1.6 1.6H20.4V15.4H5L1.6 19.2z" fill="none" stroke="#fff" stroke-width="2.5" stroke-linejoin="round"/><path d="M5.5 5.6h11M5.5 8.6h11M5.5 11.6h7" stroke="#fff" stroke-width="2"/></svg>
<svg style="left:289px;top:766px" width="22" height="21" viewBox="0 0 22 21"><path d="M11 1.8L15 8H7z" fill="#fff" stroke="#fff" stroke-width="1.6" stroke-linejoin="round"/><path d="M11 4.6L12.6 7H9.4z" fill="#202124"/><rect x="2" y="12.2" width="6.8" height="6.8" fill="none" stroke="#fff" stroke-width="2.4"/><circle cx="16.5" cy="15.6" r="3.5" fill="none" stroke="#fff" stroke-width="2.4"/></svg>
<svg style="left:337.5px;top:764px" width="22" height="24" viewBox="0 0 22 24"><path d="M5 9V6a5 5 0 0 1 10 0v3" fill="none" stroke="#fff" stroke-width="2"/><path d="M11 21.5H2.5V9.5H16.5V12" fill="none" stroke="#fff" stroke-width="2"/><circle cx="16.5" cy="18" r="5" fill="#fff"/><circle cx="16.5" cy="16.3" r="1.4" fill="#202124"/><path d="M14 20.8a2.6 2.6 0 0 1 5 0" fill="#202124"/></svg>
<div class="a" style="left:35px;top:549px;width:333px;height:187px;border-radius:8px;overflow:hidden;background:#cdcdcd">
<svg style="left:0;top:0" width="333" height="187" viewBox="0 0 333 187">
<defs>
<filter id="bl" x="-10%" y="-10%" width="120%" height="120%"><feGaussianBlur stdDeviation="2.2"/></filter>
<filter id="bl1" x="-10%" y="-10%" width="120%" height="120%"><feGaussianBlur stdDeviation="0.9"/></filter>
<filter id="bl2" x="-10%" y="-10%" width="120%" height="120%"><feGaussianBlur stdDeviation="4"/></filter>
<linearGradient id="lw" x1="0" x2="1" y1="0" y2="0"><stop offset="0" stop-color="#cfcfcf"/><stop offset="0.3" stop-color="#dcdcdc"/><stop offset="0.7" stop-color="#d6d6d6"/><stop offset="1" stop-color="#cdcdcd"/></linearGradient>
<linearGradient id="mw" x1="0" x2="1" y1="0" y2="0"><stop offset="0" stop-color="#cbcbcb"/><stop offset="0.5" stop-color="#c2c2c2"/><stop offset="1" stop-color="#bababa"/></linearGradient>
<linearGradient id="rw" x1="0" x2="1" y1="0" y2="0"><stop offset="0" stop-color="#e2e2e2"/><stop offset="0.5" stop-color="#dadada"/><stop offset="1" stop-color="#d4d4d4"/></linearGradient>
<linearGradient id="hr" x1="0" x2="0" y1="0" y2="1"><stop offset="0" stop-color="#3b3030"/><stop offset="1" stop-color="#2e2626"/></linearGradient>
<radialGradient id="fc" cx="0.5" cy="0.45" r="0.6"><stop offset="0" stop-color="#b3948c"/><stop offset="0.7" stop-color="#a4827a"/><stop offset="1" stop-color="#8f6e68"/></radialGradient>
<pattern id="hound" width="8" height="8" patternUnits="userSpaceOnUse"><rect width="8" height="8" fill="#e0e0e8"/><rect x="0" y="0" width="4" height="4" fill="#3e3e52"/><rect x="4" y="4" width="4" height="4" fill="#3e3e52"/><rect x="4" y="1" width="2" height="2" fill="#3e3e52"/></pattern>
</defs>
<g filter="url(#bl)">
<rect x="-5" y="-5" width="125" height="200" fill="url(#lw)"/>
<path d="M115 -5H207L222 195H118z" fill="url(#mw)"/>
<path d="M205 -5H340V195H222z" fill="url(#rw)"/>
<rect x="192" y="66" width="14" height="4" fill="#f0f0f0"/>
</g>
<g filter="url(#bl1)">
<path d="M30 195C33 178 45 165 70 158C90 160 105 168 122 172V195z" fill="url(#hound)" opacity="0.95"/>
<path d="M168 195V164C185 160 215 160 232 168C242 175 246 185 248 195z" fill="url(#hound)" opacity="0.95"/>
</g>
<g filter="url(#bl)">
<path d="M78 150C74 122 82 95 92 76C105 50 125 36 147 36C175 37 195 52 201 72C207 95 208 125 211 155C212 170 208 180 206 195H118C112 180 100 168 78 150z" fill="url(#hr)"/>
<path d="M97 112C96 95 100 86 108 84C125 88 160 86 188 95C190 105 188 120 186 135C182 155 165 168 140 168C115 167 98 145 97 112z" fill="url(#fc)"/>
<path d="M116 166C125 170 155 170 172 164L174 195H114z" fill="#9d7d76"/>
<ellipse cx="125" cy="104" rx="9" ry="2.6" fill="#7f625c"/>
<ellipse cx="163" cy="104" rx="9" ry="2.6" fill="#7f625c"/>
<path d="M142 118L139 131H147z" fill="#977670"/>
<ellipse cx="141.5" cy="152" rx="13" ry="3.5" fill="#8a4646"/>
</g>
</svg>
</div>
<div class="t" style="font-size:14px;-webkit-text-stroke:0.45px #fff;left:51.49999999999996px;top:707.6px;color:#fff;transform-origin:0 0;transform:scaleX(1.044);text-shadow:0 0 2px rgba(0,0,0,0.35)">Эльмира Абдыкеримова</div>
</div>

<!-- ================= TASKBAR ================= -->
<div class="a" id="taskbar" style="left:0;top:816px;width:1536px;height:48px;background:linear-gradient(90deg,#e3ecf6 0%,#e6eef8 25%,#dfe8f6 55%,#e1eaf6 80%,#e4ecf6 100%)">
<svg style="left:21px;top:16px" width="25" height="17" viewBox="0 0 25 17"><defs><linearGradient id="cl" x1="0" x2="0" y1="0" y2="1"><stop offset="0" stop-color="#c5d3f0"/><stop offset="1" stop-color="#9fb6e0"/></linearGradient></defs><path d="M5 16.5a4.5 4.5 0 0 1-0.5-9A7 7 0 0 1 17.5 5.5 5.5 5.5 0 0 1 20 16.5z" fill="url(#cl)"/></svg>
<div class="t f12" style="left:52.7px;top:10.5px;color:#1f1f1f">2°C</div>
<div class="t f12" style="left:52.7px;top:26.1px;color:#5d5d5d">Cloudy</div>
<svg style="left:401px;top:13px" width="24" height="24" viewBox="0 0 24 24"><defs><linearGradient id="wg" x1="0" y1="0" x2="1" y2="1"><stop offset="0" stop-color="#3ccbf4"/><stop offset="1" stop-color="#0b6fd0"/></linearGradient></defs><rect x="0" y="0" width="11.3" height="11.3" fill="url(#wg)"/><rect x="12.2" y="0" width="11.3" height="11.3" fill="url(#wg)"/><rect x="0" y="12.2" width="11.3" height="11.3" fill="url(#wg)"/><rect x="12.2" y="12.2" width="11.3" height="11.3" fill="url(#wg)"/></svg>
<div class="a" style="left:440px;top:9px;width:217px;height:30px;border-radius:15px;background:#f2f5fa;box-shadow:0 0 0 1px #dde3ec"></div>
<svg style="left:449.5px;top:17.5px" width="16" height="15" viewBox="0 0 16 15"><circle cx="9.5" cy="6" r="4.9" fill="none" stroke="#1f1f1f" stroke-width="1.8"/><path d="M6 9.6L1.2 14.2" stroke="#1f1f1f" stroke-width="2" stroke-linecap="round"/></svg>
<div class="t" style="font-size:14px;left:476px;top:18.1px;color:#5f5f5f">Поиск</div>
<svg style="left:604px;top:12px" width="53" height="27" viewBox="0 0 53 27"><defs><clipPath id="wfc"><path d="M0 27V0H37A13.5 13.5 0 0 1 37 27z"/></clipPath></defs><g clip-path="url(#wfc)"><path d="M0 27L10 12 18 10 22 18 26 4 33 3 36 14 44 10 53 14V27z" fill="#6f7a3a"/><path d="M3 27L12 15 17 14 20 22z" fill="#8b9a48"/><path d="M27 8L32 6 35 16 30 20z" fill="#9aa858"/><path d="M38 14L46 12 53 16 53 24 40 24z" fill="#a2ad55"/><path d="M0 27L6 18 14 22 12 27z" fill="#4b4a2a"/><path d="M18 12L21 12 23 27 17 27z" fill="#a8d8e8"/><path d="M32 10L34 10 36 27 31 27z" fill="#b8e4f0"/><path d="M10 24H48V27H10z" fill="#5ec0d8"/></g></svg>
<div class="a" style="left:677px;top:12.600000000000023px;width:17px;height:16.5px;background:#f0f0f0;box-shadow:0 0 1px #ccc"></div>
<div class="a" style="left:670.3px;top:18.799999999999955px;width:18px;height:15.7px;background:#222"></div>
<div class="a" style="left:677px;top:18.799999999999955px;width:11.3px;height:10.2px;background:#b8b8b8"></div>
<svg style="left:714.5px;top:12.5px" width="23" height="23" viewBox="0 0 23 23"><path d="M11.5 0.5a11 11 0 1 1-5.5 20.5L1 22.5 2.2 17.5A11 11 0 0 1 11.5 0.5z" fill="#6a68d0"/><rect x="5.5" y="7.5" width="8.5" height="8" rx="1.3" fill="#fff"/><path d="M14.5 10L18 8V15L14.5 13z" fill="#fff"/></svg>
<svg style="left:758.5px;top:12.5px" width="24" height="24" viewBox="0 0 24 24"><defs><linearGradient id="og" x1="0" y1="0" x2="0" y2="1"><stop offset="0" stop-color="#ff1b2d"/><stop offset="1" stop-color="#c4001a"/></linearGradient></defs><path fill-rule="evenodd" d="M12 0.8a11 11.2 0 1 1 0 22.4a11 11.2 0 1 1 0-22.4zM12 4.2a4.6 7.9 0 1 0 0 15.8a4.6 7.9 0 1 0 0-15.8z" fill="url(#og)"/></svg>
<svg style="left:802px;top:11.5px" width="25" height="25" viewBox="0 0 25 25"><defs><linearGradient id="eg1" x1="0" y1="1" x2="1" y2="0"><stop offset="0" stop-color="#0c59a4"/><stop offset="0.5" stop-color="#1e8fd8"/><stop offset="1" stop-color="#4ad46a"/></linearGradient></defs><circle cx="12.5" cy="12.5" r="12" fill="url(#eg1)"/><path d="M6 14.5c0-4 3-6.5 7-6.5 3.5 0 6 2 6 4.5 0 1.5-1.5 2.5-3.5 2.5-1.5 0-2.5-.7-2.5-1.6 0-.6.4-1 .9-1.2-2.5-.6-5 1-5 3.5 0 3 3 5.3 7 5.3 2 0 3.6-.5 5-1.4-2 2.8-5.2 4.4-8.5 4.4C8.7 24 6 19.5 6 14.5z" fill="#fff" opacity="0.95"/></svg>
<svg style="left:846.5px;top:12px" width="25" height="25" viewBox="0 0 25 25"><circle cx="12.5" cy="12.5" r="12" fill="#f1442a"/><path d="M13.5 19.5V6H12a3.6 3.6 0 0 0-0.5 7.2L8 19.5M13.5 13.2H11.5" fill="none" stroke="#fff" stroke-width="2"/></svg>
<svg style="left:890.5px;top:11px" width="24" height="26" viewBox="0 0 24 26"><path d="M7.5 5V3.5a2 2 0 0 1 2-2h5a2 2 0 0 1 2 2V5" fill="none" stroke="#2a7fd4" stroke-width="1.8"/><rect x="0.5" y="4.5" width="23" height="20.5" rx="3" fill="#1d5eaa"/><rect x="7.5" y="10" width="4" height="4" fill="#f25022"/><rect x="12.5" y="10" width="4" height="4" fill="#7fba00"/><rect x="7.5" y="15" width="4" height="4" fill="#00a4ef"/><rect x="12.5" y="15" width="4" height="4" fill="#ffb900"/></svg>
<svg style="left:934px;top:12px" width="25" height="25" viewBox="0 0 25 25"><defs><radialGradient id="fg" cx="0.4" cy="0.35" r="0.7"><stop offset="0" stop-color="#f06040"/><stop offset="0.7" stop-color="#c8281a"/><stop offset="1" stop-color="#8a1410"/></radialGradient></defs><circle cx="12.5" cy="12.5" r="12" fill="url(#fg)"/><path d="M17.5 6.5c-4 0-5 2.5-5.8 5.5S10 18.5 6.5 18.5M9.5 12h5" fill="none" stroke="#fff" stroke-width="1.9"/></svg>
<svg style="left:978px;top:13.5px" width="25" height="22" viewBox="0 0 25 22"><path d="M0.5 2a1.5 1.5 0 0 1 1.5-1.5H8.5L11 3H23a1.5 1.5 0 0 1 1.5 1.5V20a1.5 1.5 0 0 1-1.5 1.5H2A1.5 1.5 0 0 1 0.5 20z" fill="#f2b824"/><rect x="0.5" y="5.5" width="24" height="16" rx="1.5" fill="#ffd659"/><path d="M5 21.5V17a1 1 0 0 1 1-1h13a1 1 0 0 1 1 1v4.5z" fill="#1f6fd0"/></svg>
<svg style="left:1022.5px;top:12px" width="24" height="24" viewBox="0 0 24 24"><circle cx="12" cy="12" r="11.5" fill="#2e9e4c"/><path d="M12 12L2 6.2A11.5 11.5 0 0 1 22 6.2z" fill="#e23b2e"/><path d="M12 12L22 6.2A11.5 11.5 0 0 1 12 23.5z" fill="#f5c01b"/><circle cx="12" cy="12" r="5.2" fill="#fff"/><circle cx="12" cy="12" r="4.1" fill="#2f7de1"/></svg>
<div class="a" style="left:1035.5px;top:6.7999999999999545px;width:15.5px;height:15.5px;border-radius:50%;background:#e9492c"></div>
<div class="t" style="font-size:9px;left:1035.5px;width:15.5px;text-align:center;top:9.9px;color:#fff">3</div>
<div class="a" style="left:1031.5px;top:40px;width:6px;height:2.5px;border-radius:1px;background:#7a7f88"></div>
<div class="a" style="left:1060px;top:5px;width:37px;height:38px;border-radius:4px;background:#eef2f8"></div>
<svg style="left:1066.5px;top:12px" width="23" height="23" viewBox="0 0 23 23"><rect x="9" y="3" width="13.5" height="17" rx="1" fill="#fff" stroke="#c94f31" stroke-width="1"/><path d="M13 7.5h6M13 10.5h6M13 13.5h6" stroke="#d06040" stroke-width="1.1"/><path d="M0 2.6L13.5 0V23L0 20.4z" fill="#d04a2a"/><path d="M4 16.5V6.5H7a2.7 2.7 0 0 1 0 5.5H4" fill="none" stroke="#fff" stroke-width="1.9"/></svg>
<div class="a" style="left:1071px;top:40px;width:15.5px;height:3px;border-radius:1.5px;background:#1a6ec4"></div>
<svg style="left:1110.5px;top:12px" width="23" height="23" viewBox="0 0 23 23"><rect x="9" y="3" width="13.5" height="17" rx="1" fill="#fff" stroke="#2b579a" stroke-width="1"/><path d="M13 7h7M13 9.5h7M13 12h7M13 14.5h7M13 17h7" stroke="#2b579a" stroke-width="1.1"/><path d="M0 2.6L13.5 0V23L0 20.4z" fill="#2b5ba8"/><path d="M2.2 7.5L4 16 6.5 9.5 9 16 10.8 7.5" fill="none" stroke="#fff" stroke-width="1.5"/></svg>
<div class="a" style="left:1119.5px;top:40px;width:6px;height:2.5px;border-radius:1px;background:#7a7f88"></div>
<svg style="left:1254.5px;top:20px" width="13" height="8" viewBox="0 0 13 8"><path d="M0.8 7.2L6.5 1.5 12.2 7.2" fill="none" stroke="#1f1f1f" stroke-width="1.3"/></svg>
<svg style="left:1276.5px;top:16px" width="18" height="17" viewBox="0 0 18 17"><path d="M2 7A6.5 6.5 0 0 1 14 4M13.5 1V4.5H10" fill="none" stroke="#333" stroke-width="1.3"/><path d="M15 10A6.5 6.5 0 0 1 3 13M3.5 16V12.5H7" fill="none" stroke="#333" stroke-width="1.3"/><circle cx="13.5" cy="13" r="3.8" fill="#0a64d8"/></svg>
<svg style="left:1306.5px;top:16px" width="12" height="16" viewBox="0 0 12 16"><rect x="3.2" y="0.7" width="5.6" height="9.6" rx="2.8" fill="none" stroke="#1e6ed6" stroke-width="1.3"/><path d="M1 7.5a5 5 0 0 0 10 0M6 12.5V15.5" fill="none" stroke="#1e6ed6" stroke-width="1.3"/></svg>
<div class="t f12" style="left:1340px;top:18.1px;color:#1f1f1f;transform-origin:0 0;transform:scaleX(0.9)">ENG</div>
<svg style="left:1380.5px;top:16px" width="17" height="14" viewBox="0 0 17 14"><path d="M1 5a10.5 10.5 0 0 1 15 0M3.5 7.6a7 7 0 0 1 10 0M6 10.2a3.5 3.5 0 0 1 5 0" fill="none" stroke="#1f1f1f" stroke-width="1.4"/><circle cx="8.5" cy="12.6" r="1.2" fill="#1f1f1f"/></svg>
<svg style="left:1404.5px;top:16px" width="17" height="16" viewBox="0 0 17 16"><path d="M1 5.5H4L8 1.8V14.2L4 10.5H1z" fill="none" stroke="#1f1f1f" stroke-width="1.2" stroke-linejoin="round"/><path d="M10.5 5.5a3.5 3.5 0 0 1 0 5M12.8 3.5a6.5 6.5 0 0 1 0 9M15 1.8a9 9 0 0 1 0 12.4" fill="none" stroke="#1f1f1f" stroke-width="1.2"/></svg>
<svg style="left:1428.5px;top:19.5px" width="17" height="9" viewBox="0 0 17 9"><rect x="0.6" y="0.6" width="13.5" height="7.8" rx="1.8" fill="none" stroke="#1f1f1f" stroke-width="1.2"/><rect x="2.3" y="2.3" width="3.2" height="4.4" fill="#1f1f1f"/><path d="M15.3 3v3" stroke="#1f1f1f" stroke-width="1.5"/></svg>
<div class="t f12" style="left:1416.5px;width:100px;text-align:right;top:9.6px;color:#1f1f1f;transform-origin:100% 0;transform:scaleX(0.91)">15:35</div>
<div class="t f12" style="left:1416.5px;width:100px;text-align:right;top:25.8px;color:#1f1f1f;transform-origin:100% 0;transform:scaleX(0.937)">06.12.2023</div>
</div>

</body></html>
